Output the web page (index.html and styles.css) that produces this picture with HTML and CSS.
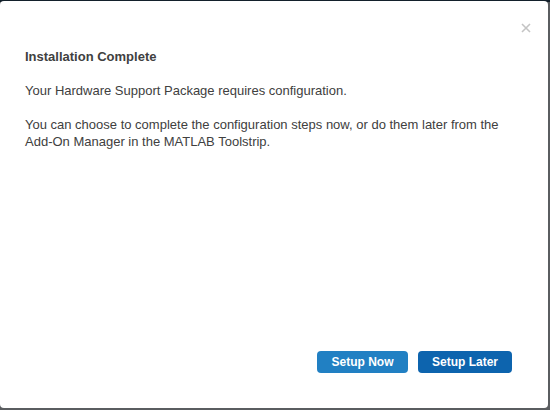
FILE: index.html
```html
<!DOCTYPE html>
<html>
<head>
<meta charset="utf-8">
<link rel="stylesheet" href="styles.css">
</head>
<body>
<div class="dialog">
  <div class="header">
    <span class="close" aria-label="Close">
      <svg width="10" height="10" viewBox="0 0 10 10"><path d="M1 1L9 9M9 1L1 9" stroke="#c4c4c4" stroke-width="1.6" fill="none"/></svg>
    </span>
  </div>
  <div class="content">
    <h1 class="title">Installation Complete</h1>
    <p class="text">Your Hardware Support Package requires configuration.</p>
    <p class="text">You can choose to complete the configuration steps now, or do them later from the Add-On Manager in the MATLAB Toolstrip.</p>
  </div>
  <div class="footer">
    <button class="btn btn-now">Setup Now</button>
    <button class="btn btn-later">Setup Later</button>
  </div>
</div>
</body>
</html>
```

FILE: styles.css
```css
html, body {
  margin: 0;
  padding: 0;
  height: 100%;
}
body {
  background: linear-gradient(to bottom, #13202b 0, #13202b 2px, #5a5d60 2px);
  font-family: "Liberation Sans", Arial, sans-serif;
  overflow: hidden;
}
.dialog {
  margin-top: 1px;
  width: 548px;
  height: 407px;
  background: #fff;
  border-radius: 4px;
  display: flex;
  flex-direction: column;
  box-sizing: border-box;
}
.header {
  display: flex;
  justify-content: flex-end;
  padding: 22px 17px 0 0;
  height: 14px;
}
.close {
  display: flex;
  width: 10px;
  height: 10px;
}
.content {
  padding: 11px 25px 0 25px;
  color: #404040;
}
.title {
  margin: 0;
  font-size: 13px;
  font-weight: bold;
  line-height: 17px;
}
.text {
  margin: 17px 0 0 0;
  font-size: 13px;
  line-height: 17px;
}
.footer {
  margin-top: auto;
  display: flex;
  justify-content: flex-end;
  gap: 10px;
  padding: 0 36px 35px 0;
}
.btn {
  height: 22px;
  border: none;
  border-radius: 4px;
  color: #fff;
  font-family: "Liberation Sans", Arial, sans-serif;
  font-size: 12px;
  font-weight: bold;
  padding: 0;
}
.btn-now {
  width: 91px;
  background: #2180c3;
}
.btn-later {
  width: 94px;
  background: #0d64ae;
}
```
